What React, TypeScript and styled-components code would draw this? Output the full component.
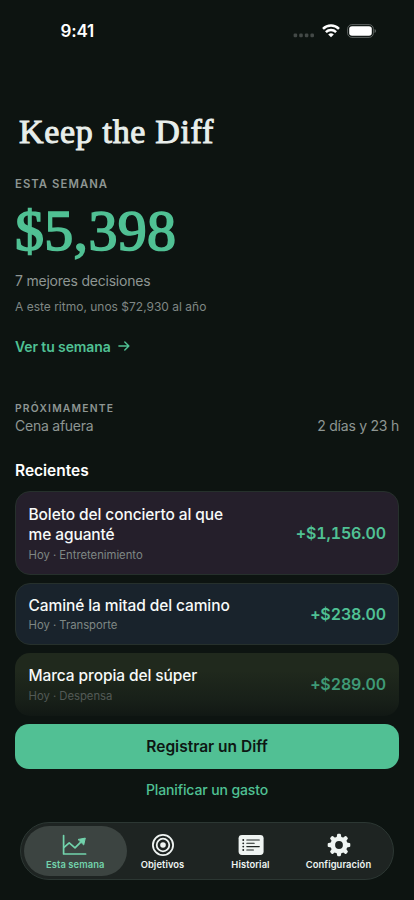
import React from 'react';
import styled, { createGlobalStyle, css } from 'styled-components';

const GlobalStyle = createGlobalStyle`
  * { box-sizing: border-box; }
  body { margin: 0; background: #0d1411; }
  button { border: 0; padding: 0; margin: 0; background: none; font: inherit; color: inherit; }
`;

const green = '#50c194';
const muted = '#8e9693';

const Screen = styled.div`
  width: 414px;
  height: 900px;
  overflow: hidden;
  display: flex;
  flex-direction: column;
  background: #0d1411;
  color: #f7faf9;
  font-family: Inter, 'Liberation Sans', sans-serif;
  white-space: nowrap;
`;

const StatusBar = styled.header`
  display: flex;
  align-items: center;
  justify-content: space-between;
  height: 62px;
  padding: 0 37px 0 60.5px;
`;

const Clock = styled.span`
  font-size: 17px;
  font-weight: 600;
  letter-spacing: -0.2px;
  line-height: 20px;
  color: #fff;
`;

const StatusIcons = styled.div`
  display: flex;
  align-items: center;
  gap: 7px;
  margin-top: -1px;
`;

const Content = styled.main`
  display: flex;
  flex-direction: column;
  padding: 0 15px;
`;

const Title = styled.h1`
  margin: 50px 0 25px 4px;
  font: 400 34px/40px 'Liberation Serif', serif;
  font-variant-ligatures: none;
  letter-spacing: 0.66px;
  -webkit-text-stroke: 1px currentColor;
  color: #e8eeeb;
`;

const Eyebrow = styled.div<{ $size: number; $spacing: number }>`
  font-size: ${p => p.$size}px;
  line-height: 14px;
  font-weight: 600;
  letter-spacing: ${p => p.$spacing}px;
  color: ${muted};
`;

const Total = styled.div`
  margin-top: 8px;
  font: 400 58px/64px 'Liberation Serif', serif;
  letter-spacing: 0.3px;
  -webkit-text-stroke: 1.7px currentColor;
  color: ${green};
`;

const Decisions = styled.div`
  margin-top: 8px;
  font-size: 14px;
  line-height: 20px;
  letter-spacing: -0.22px;
  color: ${muted};
`;

const Pace = styled.div`
  margin-top: 8px;
  font-size: 12px;
  line-height: 16px;
  color: #7f8784;
`;

const WeekLink = styled.button`
  display: flex;
  align-items: center;
  gap: 7.5px;
  margin-top: 21px;
  height: 20px;
  font-size: 14px;
  font-weight: 600;
  letter-spacing: -0.1px;
  color: ${green};
`;

const Upcoming = styled.section`
  margin-top: 45px;
`;

const UpcomingRow = styled.div`
  display: flex;
  justify-content: space-between;
  margin-top: 1px;
  font-size: 14px;
  line-height: 20px;
  letter-spacing: -0.24px;
  color: ${muted};
`;

const SectionTitle = styled.h2`
  margin: 25px 0 10px;
  font-size: 15.5px;
  line-height: 20px;
  font-weight: 600;
  letter-spacing: -0.02px;
  color: #fff;
`;

const List = styled.div`
  display: flex;
  flex-direction: column;
  gap: 8px;
`;

const tones = {
  plum: css`background: #251f2b;`,
  navy: css`background: #19232c;`,
  olive: css`
    background: linear-gradient(#20291d 0%, #20291d 28%, #171f18 78%, #111814 100%);
    border-color: transparent;
    background-origin: border-box;
  `,
};

const Entry = styled.article<{ $tone: keyof typeof tones; $height: number }>`
  display: flex;
  justify-content: space-between;
  align-items: center;
  height: ${p => p.$height}px;
  padding: 0 12px 0 12.5px;
  border: 1px solid #26302c;
  border-radius: 15px;
  ${p => tones[p.$tone]}
`;

const EntryText = styled.div`
  display: flex;
  flex-direction: column;
  gap: 2px;
  width: 210px;
  padding-top: 1.5px;
`;

const EntryName = styled.div`
  font-size: 15.5px;
  line-height: 20.5px;
  font-weight: 500;
  letter-spacing: -0.1px;
  white-space: pre-line;
`;

const EntryMeta = styled.div<{ $faded?: boolean }>`
  font-size: 11.3px;
  line-height: 15px;
  letter-spacing: -0.02px;
  color: ${p => (p.$faded ? '#535a56' : '#7f8784')};
`;

const Amount = styled.div<{ $faded?: boolean }>`
  font-size: 16px;
  line-height: 20px;
  font-weight: 600;
  font-variant-numeric: tabular-nums;
  letter-spacing: -0.12px;
  color: ${p => (p.$faded ? '#3f9a76' : green)};
`;

const PrimaryButton = styled.button`
  margin-top: 8px;
  height: 45.5px;
  border-radius: 14px;
  background: #51c094;
  color: #0d1713;
  font-size: 15.5px;
  font-weight: 600;
`;

const SecondaryButton = styled.button`
  margin-top: 10.5px;
  height: 20px;
  font-size: 14px;
  line-height: 20px;
  font-weight: 500;
  letter-spacing: -0.12px;
  color: ${green};
`;

const TabBar = styled.nav`
  display: flex;
  width: 374px;
  height: 58px;
  margin: 22.5px 0 0 20px;
  padding: 3px 2.5px;
  border: 1px solid #2c3733;
  border-radius: 29px;
  background: #1e2422;
`;

const Tab = styled.button<{ $active?: boolean; $width: number }>`
  display: flex;
  flex-direction: column;
  align-items: center;
  width: ${p => p.$width}px;
  height: 50px;
  padding-top: 5.5px;
  border-radius: 25px;
  background: ${p => (p.$active ? '#3c4441' : 'transparent')};
  color: ${p => (p.$active ? '#72d3ac' : '#eff4f2')};
`;

const TabLabel = styled.span`
  margin-top: 1.5px;
  font-size: 9.4px;
  line-height: 12px;
  font-weight: 600;
  letter-spacing: 0.07px;
`;

const SignalIcon = () => (
  <svg width="22" height="14" viewBox="0 0 22 14" fill="#434947">
    {[2.4, 8, 13.6, 19.2].map(x => <rect key={x} x={x - 1.8} y="9.6" width="3.6" height="3.6" rx="1.2" />)}
  </svg>
);

const WifiIcon = () => (
  <svg width="18" height="14" viewBox="0 0 18 14" fill="none" stroke="#fff" strokeWidth="2.5">
    <path d="M1 4.9a11.4 11.4 0 0 1 16 0" />
    <path d="M3.9 8.1a7.3 7.3 0 0 1 10.2 0" />
    <path d="M9 13.3 6.2 10.5a4 4 0 0 1 5.6 0Z" fill="#fff" stroke="none" />
  </svg>
);

const BatteryIcon = () => (
  <svg width="30" height="14" viewBox="0 0 30 14">
    <rect x=".6" y=".6" width="25.8" height="12.8" rx="4.2" fill="none" stroke="#5c6260" strokeWidth="1" />
    <rect x="2.2" y="2.2" width="22.6" height="9.6" rx="2.8" fill="#fff" />
    <path d="M27.6 4.9c1.7.7 1.7 3.5 0 4.2Z" fill="#6b716f" />
  </svg>
);

const ArrowIcon = () => (
  <svg width="12" height="12" viewBox="0 0 12 12" fill="none" stroke="currentColor" strokeWidth="1.4" strokeLinecap="round" strokeLinejoin="round">
    <path d="M.9 6h10M6.8 1.9 10.9 6 6.8 10.1" />
  </svg>
);

const ChartIcon = () => (
  <svg width="26" height="26" viewBox="0 0 26 26" fill="none" stroke="currentColor" strokeWidth="1.7" strokeLinecap="round" strokeLinejoin="round">
    <path d="M1.6 3.6v18.4h22" />
    <path d="m2 15.4 5.2-4.6 5.8 5 6-6" />
    <path d="m16.4 7.4 6.9-1.3-1.5 6.5Z" fill="currentColor" strokeWidth="1" />
  </svg>
);

const TargetIcon = () => (
  <svg width="26" height="26" viewBox="0 0 26 26" fill="none" stroke="currentColor" strokeWidth="1.8">
    <circle cx="13" cy="13" r="10.1" />
    <circle cx="13" cy="13" r="6.3" />
    <circle cx="13" cy="13" r="2.8" fill="currentColor" stroke="none" />
  </svg>
);

const HistoryIcon = () => (
  <svg width="26" height="26" viewBox="0 0 26 26">
    <rect x=".6" y="2.9" width="25" height="20" rx="3.4" fill="currentColor" />
    <g stroke="#1e2422" strokeWidth="1.1" strokeLinecap="round">
      <path d="M8.8 8h12.5M8.8 11.3h7.4M8.8 14.6h12.5M8.8 18h6.6" />
      <path d="M5.2 8h.1M5.2 11.3h.1M5.2 14.6h.1M5.2 18h.1" strokeWidth="1.8" />
    </g>
  </svg>
);

const GearIcon = () => (
  <svg width="26" height="26" viewBox="0 0 26 26">
    <g fill="currentColor">
      <path fillRule="evenodd" d="M13 4.4a8.6 8.6 0 1 1 0 17.2 8.6 8.6 0 0 1 0-17.2Zm0 4.7a3.9 3.9 0 1 0 0 7.8 3.9 3.9 0 0 0 0-7.8Z" />
      {[0, 45, 90, 135, 180, 225, 270, 315].map(a => (
        <path key={a} transform={`rotate(${a} 13 13)`} d="M10.6 5.4 11.1 2.7q.2-1 1-1h1.8q.8 0 1 1l.5 2.7Z" />
      ))}
    </g>
  </svg>
);

const entries = [
  { name: 'Boleto del concierto al que\nme aguanté', meta: 'Hoy · Entretenimiento', amount: '+$1,156.00', tone: 'plum', height: 83.5 },
  { name: 'Caminé la mitad del camino', meta: 'Hoy · Transporte', amount: '+$238.00', tone: 'navy', height: 62.5 },
  { name: 'Marca propia del súper', meta: 'Hoy · Despensa', amount: '+$289.00', tone: 'olive', height: 62.5, faded: true },
] as const;

const tabs = [
  { label: 'Esta semana', Icon: ChartIcon, width: 103.5 },
  { label: 'Objetivos', Icon: TargetIcon, width: 71 },
  { label: 'Historial', Icon: HistoryIcon, width: 105 },
  { label: 'Configuración', Icon: GearIcon, width: 71 },
];

export default function App() {
  return (
    <>
      <GlobalStyle />
      <Screen>
        <StatusBar>
          <Clock>9:41</Clock>
          <StatusIcons><SignalIcon /><WifiIcon /><BatteryIcon /></StatusIcons>
        </StatusBar>
        <Content>
          <Title>Keep the Diff</Title>
          <Eyebrow $size={11.3} $spacing={1.07}>ESTA SEMANA</Eyebrow>
          <Total>$5,398</Total>
          <Decisions>7 mejores decisiones</Decisions>
          <Pace>A este ritmo, unos $72,930 al año</Pace>
          <WeekLink>Ver tu semana <ArrowIcon /></WeekLink>
          <Upcoming>
            <Eyebrow $size={10.3} $spacing={1.22}>PRÓXIMAMENTE</Eyebrow>
            <UpcomingRow><span>Cena afuera</span><span>2 días y 23 h</span></UpcomingRow>
          </Upcoming>
          <SectionTitle>Recientes</SectionTitle>
          <List>
            {entries.map(e => {
              const faded = 'faded' in e;
              return (
                <Entry key={e.name} $tone={e.tone} $height={e.height}>
                  <EntryText>
                    <EntryName>{e.name}</EntryName>
                    <EntryMeta $faded={faded}>{e.meta}</EntryMeta>
                  </EntryText>
                  <Amount $faded={faded}>{e.amount}</Amount>
                </Entry>
              );
            })}
          </List>
          <PrimaryButton>Registrar un Diff</PrimaryButton>
          <SecondaryButton>Planificar un gasto</SecondaryButton>
        </Content>
        <TabBar>
          {tabs.map(({ label, Icon, width }, i) => (
            <Tab key={label} $active={i === 0} $width={width}>
              <Icon />
              <TabLabel>{label}</TabLabel>
            </Tab>
          ))}
        </TabBar>
      </Screen>
    </>
  );
}
